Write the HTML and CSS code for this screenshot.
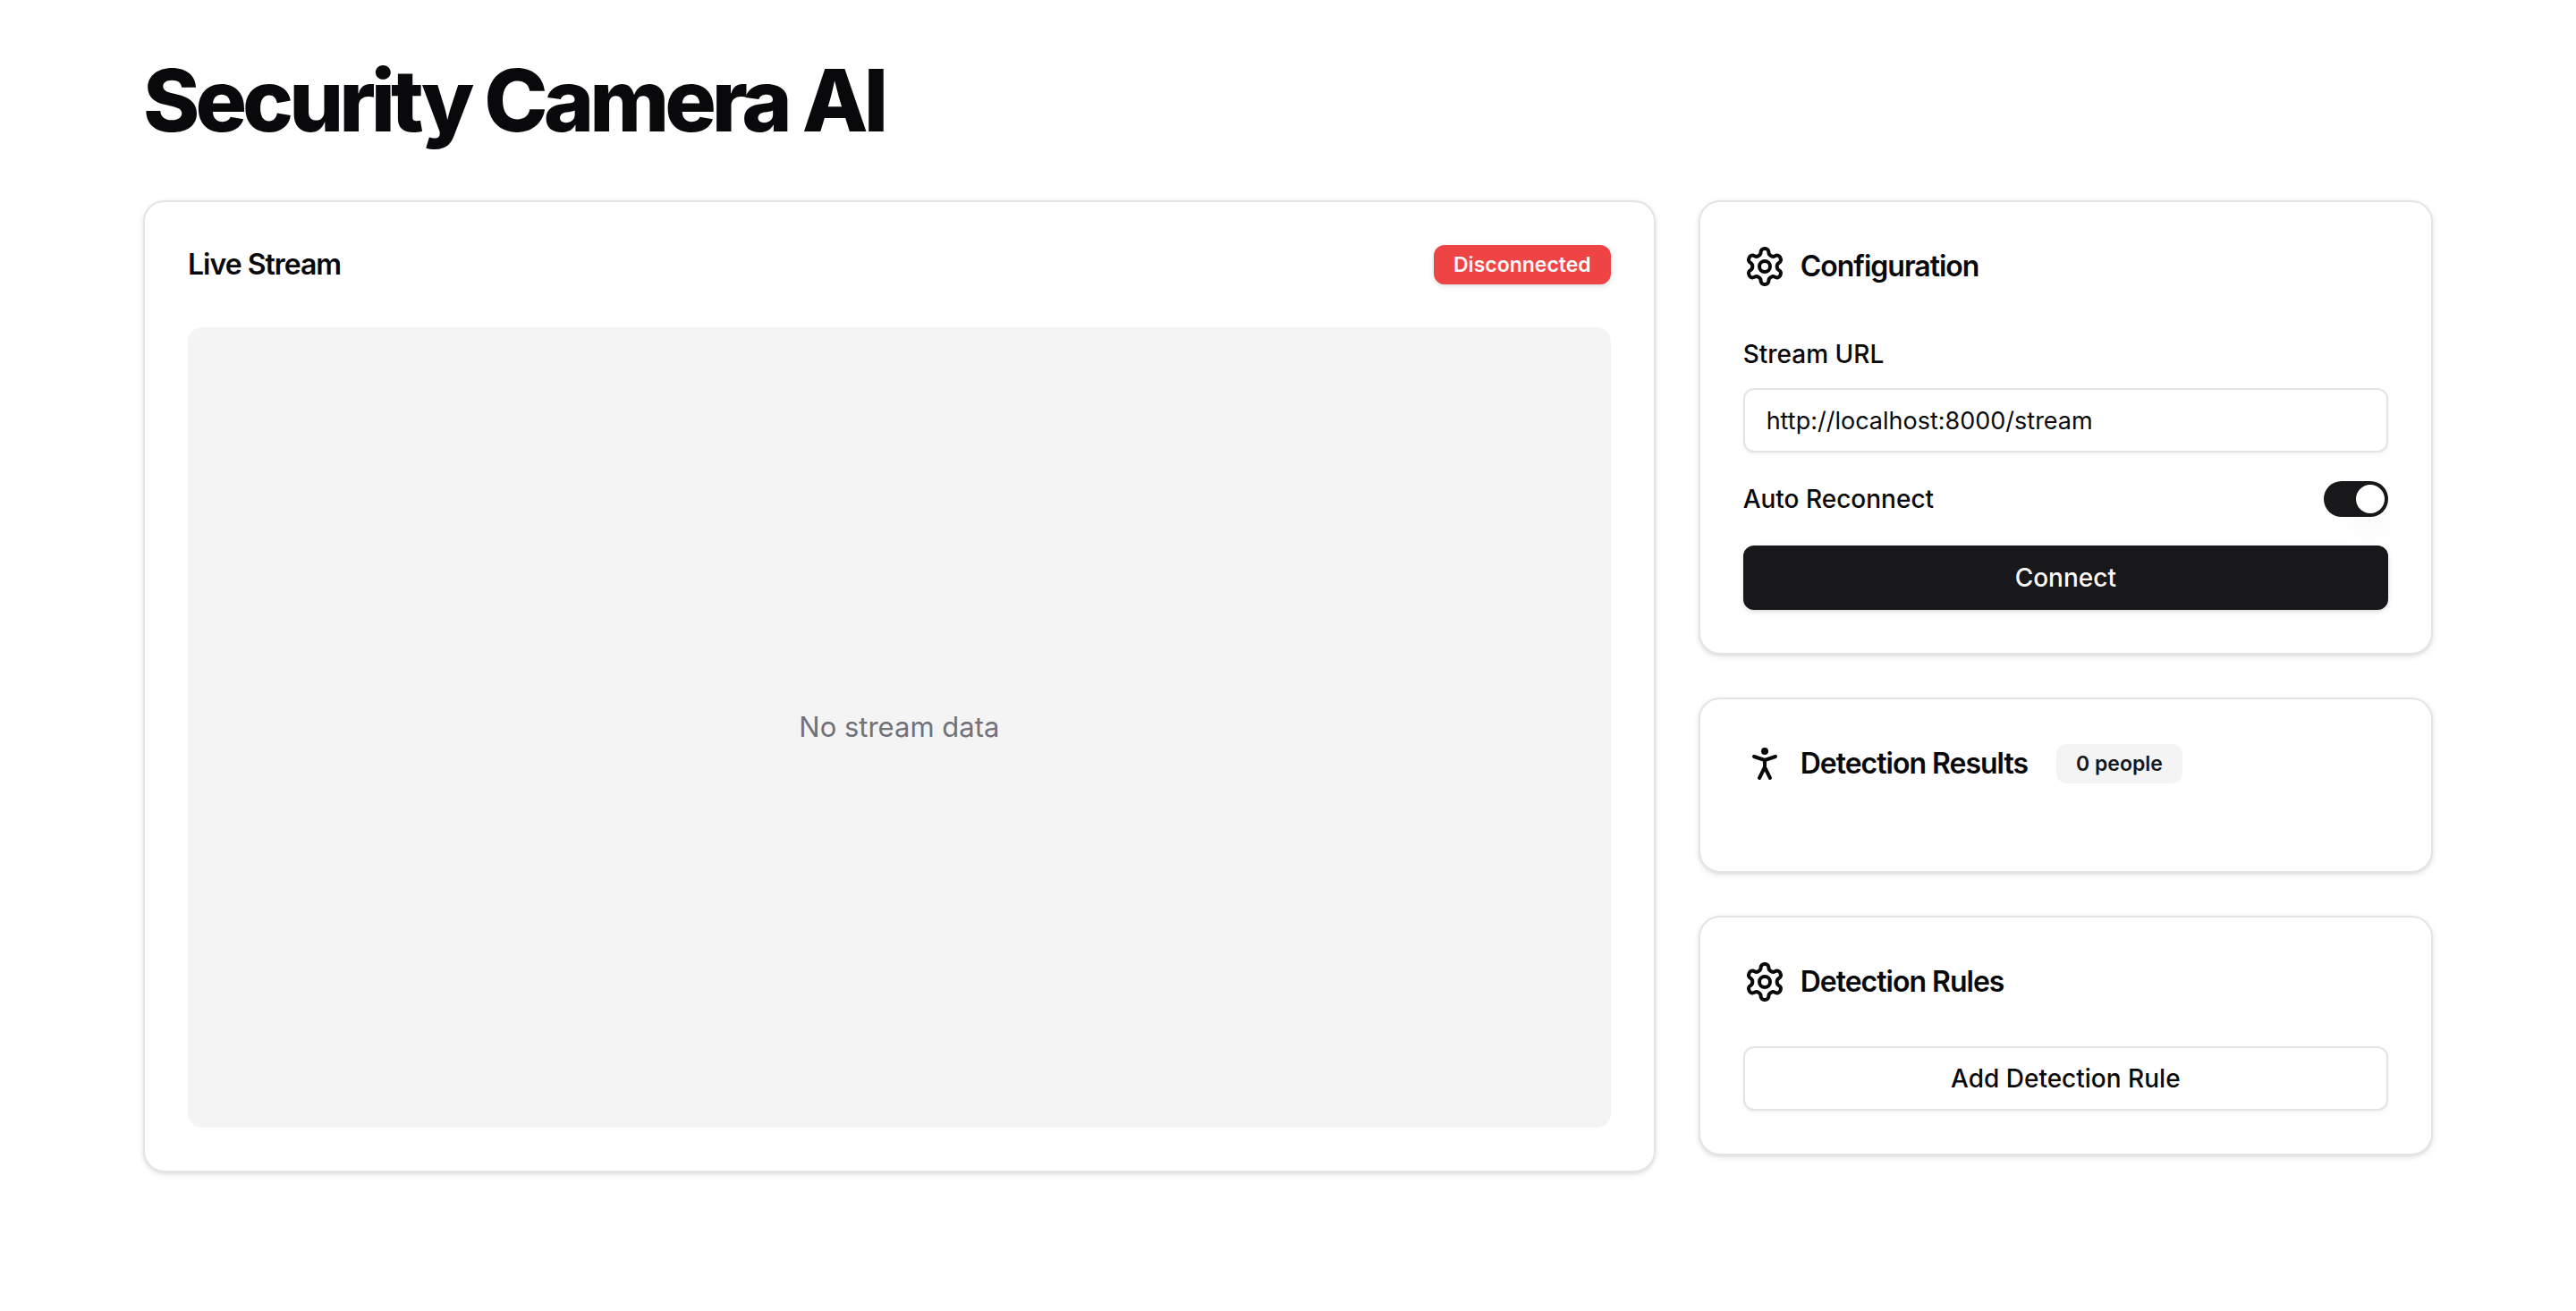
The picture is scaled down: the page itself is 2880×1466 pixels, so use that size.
FILE: index.html
```html
<!DOCTYPE html>
<html lang="en">
<head>
  <meta charset="utf-8">
  <meta name="viewport" content="width=device-width, initial-scale=1">
  <title>Security Camera AI</title>
  <link rel="stylesheet" href="styles.css">
</head>
<body>
  <main class="page">
    <h1 class="page-title">Security Camera AI</h1>
    <div class="layout">
      <section class="card">
        <header class="card-header card-header-split">
          <h2 class="card-title">Live Stream</h2>
          <span class="badge badge-danger">Disconnected</span>
        </header>
        <div class="video">No stream data</div>
      </section>

      <div class="sidebar">
        <section class="card">
          <header class="card-header">
            <svg class="icon" viewBox="0 0 24 24" aria-hidden="true">
              <path d="M12.22 2h-.44a2 2 0 0 0-2 2v.18a2 2 0 0 1-1 1.73l-.43.25a2 2 0 0 1-2 0l-.15-.08a2 2 0 0 0-2.73.73l-.22.38a2 2 0 0 0 .73 2.73l.15.1a2 2 0 0 1 1 1.72v.51a2 2 0 0 1-1 1.74l-.15.09a2 2 0 0 0-.73 2.73l.22.38a2 2 0 0 0 2.73.73l.15-.08a2 2 0 0 1 2 0l.43.25a2 2 0 0 1 1 1.73V20a2 2 0 0 0 2 2h.44a2 2 0 0 0 2-2v-.18a2 2 0 0 1 1-1.73l.43-.25a2 2 0 0 1 2 0l.15.08a2 2 0 0 0 2.73-.73l.22-.39a2 2 0 0 0-.73-2.73l-.15-.08a2 2 0 0 1-1-1.74v-.5a2 2 0 0 1 1-1.74l.15-.09a2 2 0 0 0 .73-2.73l-.22-.38a2 2 0 0 0-2.73-.73l-.15.08a2 2 0 0 1-2 0l-.43-.25a2 2 0 0 1-1-1.73V4a2 2 0 0 0-2-2z"/>
              <circle cx="12" cy="12" r="3"/>
            </svg>
            <h2 class="card-title">Configuration</h2>
          </header>
          <form class="form">
            <div class="field">
              <label class="label" for="stream-url">Stream URL</label>
              <input class="input" id="stream-url" type="text" value="http://localhost:8000/stream">
            </div>
            <div class="switch-row">
              <label class="label" for="auto-reconnect">Auto Reconnect</label>
              <input class="switch" id="auto-reconnect" type="checkbox" role="switch" checked>
            </div>
            <button class="button button-primary" type="button">Connect</button>
          </form>
        </section>

        <section class="card">
          <header class="card-header">
            <svg class="icon" viewBox="0 0 24 24" aria-hidden="true">
              <circle cx="12" cy="5" r="1"/>
              <path d="m9 20 3-6 3 6"/>
              <path d="m6 8 6 2 6-2"/>
              <path d="M12 10v4"/>
            </svg>
            <h2 class="card-title">Detection Results</h2>
            <span class="badge badge-muted">0 people</span>
          </header>
        </section>

        <section class="card">
          <header class="card-header">
            <svg class="icon" viewBox="0 0 24 24" aria-hidden="true">
              <path d="M12.22 2h-.44a2 2 0 0 0-2 2v.18a2 2 0 0 1-1 1.73l-.43.25a2 2 0 0 1-2 0l-.15-.08a2 2 0 0 0-2.73.73l-.22.38a2 2 0 0 0 .73 2.73l.15.1a2 2 0 0 1 1 1.72v.51a2 2 0 0 1-1 1.74l-.15.09a2 2 0 0 0-.73 2.73l.22.38a2 2 0 0 0 2.73.73l.15-.08a2 2 0 0 1 2 0l.43.25a2 2 0 0 1 1 1.73V20a2 2 0 0 0 2 2h.44a2 2 0 0 0 2-2v-.18a2 2 0 0 1 1-1.73l.43-.25a2 2 0 0 1 2 0l.15.08a2 2 0 0 0 2.73-.73l.22-.39a2 2 0 0 0-.73-2.73l-.15-.08a2 2 0 0 1-1-1.74v-.5a2 2 0 0 1 1-1.74l.15-.09a2 2 0 0 0 .73-2.73l-.22-.38a2 2 0 0 0-2.73-.73l-.15.08a2 2 0 0 1-2 0l-.43-.25a2 2 0 0 1-1-1.73V4a2 2 0 0 0-2-2z"/>
              <circle cx="12" cy="12" r="3"/>
            </svg>
            <h2 class="card-title">Detection Rules</h2>
          </header>
          <button class="button button-outline" type="button">Add Detection Rule</button>
        </section>
      </div>
    </div>
  </main>
</body>
</html>
```
FILE: styles.css
```css
:root {
  --foreground: #09090b;
  --muted: #f4f4f5;
  --muted-foreground: #71717a;
  --border: #e4e4e7;
  --primary: #18181b;
  --danger: #ef4444;
  --shadow: 0 2px 6px rgb(0 0 0 / 0.1), 0 2px 4px -2px rgb(0 0 0 / 0.1);
  --shadow-small: 0 2px 4px rgb(0 0 0 / 0.05);
}

*,
*::before {
  box-sizing: border-box;
}

body {
  margin: 0;
  background: #fff;
  color: var(--foreground);
  font: 400 31px/48px Inter, "Liberation Sans", sans-serif;
  -webkit-font-smoothing: antialiased;
}

h1,
h2 {
  margin: 0;
}

.page {
  padding: 64px 160px;
}

.page-title {
  margin-bottom: 64px;
  font-size: 96px;
  font-weight: 800;
  line-height: 96px;
  letter-spacing: -5px;
}

.layout {
  display: grid;
  grid-template-columns: repeat(3, minmax(0, 1fr));
  gap: 48px;
  align-items: start;
}

.layout > .card {
  grid-column: span 2;
}

.sidebar {
  display: flex;
  flex-direction: column;
  gap: 48px;
}

.card {
  padding: 48px;
  border: 2px solid var(--border);
  border-radius: 24px;
  background: #fff;
  box-shadow: var(--shadow);
}

.card-header {
  display: flex;
  align-items: center;
  gap: 16px;
  padding-bottom: 48px;
}

.card-header-split {
  justify-content: space-between;
}

.card-title {
  font-size: 32px;
  font-weight: 600;
  line-height: 32px;
  letter-spacing: -1px;
}

.icon {
  width: 48px;
  height: 48px;
  fill: none;
  stroke: currentColor;
  stroke-width: 2;
  stroke-linecap: round;
  stroke-linejoin: round;
}

.badge {
  padding: 4px 20px;
  border: 2px solid transparent;
  border-radius: 12px;
  font-size: 23px;
  font-weight: 600;
  line-height: 32px;
}

.badge-danger {
  background: var(--danger);
  color: #fafafa;
  box-shadow: var(--shadow);
}

.badge-muted {
  margin-left: 16px;
  background: var(--muted);
  color: var(--primary);
}

.video {
  display: flex;
  align-items: center;
  justify-content: center;
  aspect-ratio: 16 / 9;
  border-radius: 16px;
  background: var(--muted);
  color: var(--muted-foreground);
}

.form {
  display: flex;
  flex-direction: column;
  gap: 32px;
}

.field {
  display: flex;
  flex-direction: column;
  gap: 12px;
}

.label {
  font-size: 28px;
  font-weight: 500;
  line-height: 52px;
}

.input,
.button {
  width: 100%;
  height: 72px;
  border: 2px solid var(--border);
  border-radius: 12px;
  background: #fff;
  color: inherit;
  font: inherit;
  line-height: 40px;
  box-shadow: var(--shadow-small);
}

.input {
  padding: 8px 24px;
  font-size: 27px;
}

.button {
  padding: 8px 32px;
  font-size: 28px;
  font-weight: 500;
  cursor: pointer;
}

.button-primary {
  border-color: var(--primary);
  background: var(--primary);
  color: #fafafa;
  box-shadow: var(--shadow);
}

.switch-row {
  display: flex;
  align-items: center;
  justify-content: space-between;
  height: 40px;
}

.switch {
  display: flex;
  justify-content: flex-start;
  width: 72px;
  height: 40px;
  margin: 0;
  padding: 4px;
  border-radius: 20px;
  background: var(--border);
  appearance: none;
  cursor: pointer;
}

.switch::before {
  width: 32px;
  height: 32px;
  border-radius: 50%;
  background: #fff;
  box-shadow: 0 20px 30px -6px rgb(0 0 0 / 0.1);
  content: "";
}

.switch:checked {
  justify-content: flex-end;
  background: var(--primary);
}
```
